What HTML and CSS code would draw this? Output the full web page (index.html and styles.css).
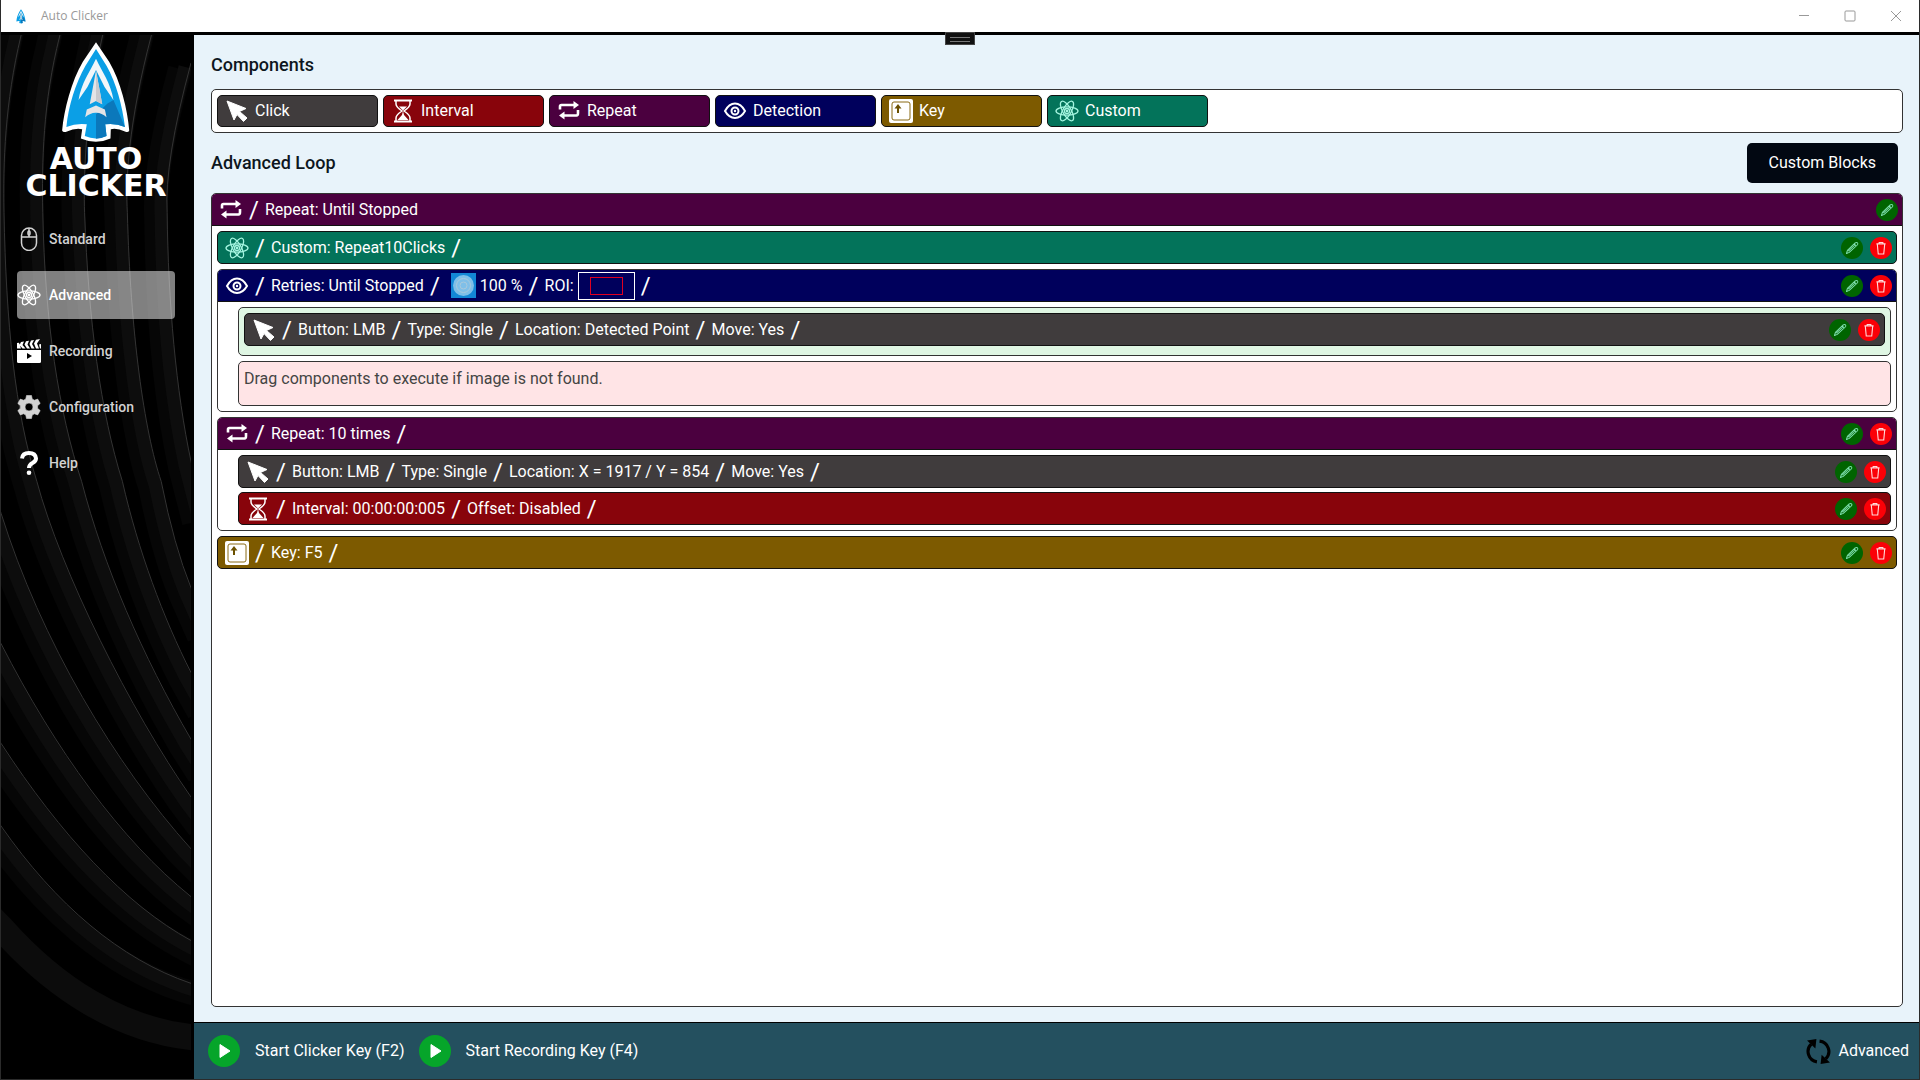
FILE: index.html
```html
<!DOCTYPE html>
<html lang="en">
<head>
    <meta charset="UTF-8">
    <meta name="viewport" content="width=device-width, initial-scale=1.0">
    <title>Auto Clicker</title>
    <link rel="stylesheet" href="styles.css">
</head>
<body>

    <!-- icon sprite -->
    <svg class="sprite" aria-hidden="true">
        <symbol id="arrowhead" viewBox="184 122 212 310">
            <path fill="#fff" d="M290 126L330 185C365 245 386 330 391 394Q388 402 378 397Q355 386 335 390L334 418Q290 438 244 418L248 390Q225 386 202 397Q190 402 187 394C193 330 215 245 250 185Z"/>
            <path fill="#0b9fe6" d="M290 146L322 197C352 250 370 320 378 383Q350 371 318 375L322 411Q290 426 256 411L262 375Q230 371 200 383C206 320 228 250 258 197Z"/>
            <path fill="#0b78bb" d="M318 375L322 411Q306 419 290 419V345L325 312L343 301L378 383Q350 371 318 375Z"/>
            <path fill="#f2f6f9" d="M290 176C308 215 335 250 343 301L316 262L290 210L264 262L237 301C245 250 272 215 290 176Z"/>
            <path fill="#e4e4e6" d="M290 212L309 314L290 304L271 314Z"/>
            <path fill="#c9c9cd" d="M290 212L309 314L290 304Z"/>
            <path fill="#e4e4e6" d="M262 330L290 318L317 330L322 354Q306 339 290 340Q274 339 257 354Z"/>
        </symbol>
        <symbol id="cursor" viewBox="0 0 24 24">
            <path fill="currentColor" d="M2 2L21 9.500L14.500 12.500L22 19L18.500 22.500L12 15.500L9 21Z" stroke="currentColor" stroke-linejoin="round"/>
        </symbol>
        <symbol id="hourglass" viewBox="0 0 24 24">
            <g fill="none" stroke="currentColor" stroke-width="1.500">
                <path d="M3 1.500H21M3 22.500H21" stroke-width="2"/>
                <path d="M5 2V5Q5 8 11 12Q5 16 5 19V22M19 2V5Q19 8 13 12Q19 16 19 19V22"/>
            </g>
            <path fill="currentColor" d="M8 7.500H16L12 11.500ZM12 12L13 16L17.500 21H6.500L11 16Z"/>
        </symbol>
        <symbol id="repeat" viewBox="0 0 24 24">
            <g fill="none" stroke="currentColor" stroke-width="2.600">
                <path d="M3 10.500V7.500Q3 6 4.500 6H18"/>
                <path d="M21 11V14Q21 16.500 19.500 16.500H6"/>
            </g>
            <path fill="currentColor" d="M16.500 2L22 6L16.500 10ZM7.500 12.500L2 16.500L7.500 20.500Z"/>
        </symbol>
        <symbol id="eye" viewBox="0 0 24 24">
            <g fill="none" stroke="currentColor" stroke-width="2">
                <path d="M2 12Q6 4.500 12 4.500T22 12Q18 19 12 19T2 12Z"/>
                <circle cx="12" cy="12" r="3.500"/>
            </g>
            <circle cx="12" cy="12" r="1.200" fill="currentColor"/>
        </symbol>
        <symbol id="key" viewBox="0 0 24 24">
            <rect width="24" height="24" rx="2" fill="#fff"/>
            <rect x="3" y="3" width="18" height="18" rx="2" fill="none" stroke="#8a6a14" stroke-width="1"/>
            <path fill="#6b5000" d="M9 5L12.500 9.500H10V14H8V9.500H5.500Z"/>
        </symbol>
        <symbol id="atom" viewBox="0 0 24 24">
            <g fill="none" stroke="currentColor" stroke-width="1.300">
                <ellipse cx="12" cy="12" rx="11" ry="4.200"/>
                <ellipse cx="12" cy="12" rx="11" ry="4.200" transform="rotate(60 12 12)"/>
                <ellipse cx="12" cy="12" rx="11" ry="4.200" transform="rotate(120 12 12)"/>
                <circle cx="12" cy="12" r="2.500"/>
            </g>
            <circle cx="12" cy="12" r="1.300" fill="currentColor"/>
        </symbol>
        <symbol id="mouse" viewBox="0 0 24 24">
            <g fill="none" stroke="currentColor" stroke-width="1.500">
                <rect x="4.500" y="1" width="15" height="22.500" rx="7.500"/>
                <path d="M4.500 10H19.500M12 1V10"/>
                <rect x="11" y="4" width="2" height="4" rx="1"/>
            </g>
        </symbol>
        <symbol id="clapper" viewBox="0 0 24 24">
            <path fill="currentColor" d="M0 11H24V22.500Q24 24 22.500 24H1.500Q0 24 0 22.500Z"/>
            <path fill="#000" d="M10 14L15 17L10 20Z"/>
            <path fill="currentColor" d="M0 4L2 3.700L4 9.500H0ZM4 3L7 2.500L5.500 6L8.500 9.500H5.500L2.500 6ZM9 2.300L12 1.800L10.500 5.500L13 9.500H10L7.500 5.500ZM14 1.500L17 1L15 5L17.500 9.500H14.500L12.500 5ZM19 .7L23 0L20 4.500L22 9.500H19L17 4.500ZM24 5V9.500H23L22 5.500Z"/>
        </symbol>
        <symbol id="gear" viewBox="0 0 24 24">
            <path fill="currentColor" fill-rule="evenodd" d="M9.500 0.500H14.500L15.200 3.900L17.400 5.200L20.700 4.100L23.200 8.400L20.600 10.700V13.300L23.200 15.600L20.700 19.900L17.400 18.800L15.200 20.100L14.500 23.500H9.500L8.800 20.100L6.600 18.800L3.300 19.900L.8 15.600L3.400 13.300V10.700L.8 8.400L3.300 4.100L6.600 5.200L8.800 3.900ZM12 8A4 4 0 1 0 12 16A4 4 0 1 0 12 8Z" stroke="currentColor" stroke-linejoin="round" stroke-width=".6"/>
        </symbol>
        <symbol id="question" viewBox="0 0 24 24">
            <path fill="none" stroke="currentColor" stroke-width="4" d="M5 7.500Q5.500 2 12 2T19 7.500Q19 10 15.500 12Q12 13.800 12 17"/>
            <circle cx="12" cy="21.700" r="2.300" fill="currentColor"/>
        </symbol>
        <symbol id="pencil" viewBox="0 0 24 24">
            <circle cx="12" cy="12" r="12" fill="#006400"/>
            <path fill="none" stroke="#7fe0b0" stroke-width="1.100" stroke-linejoin="round" d="M6 18L7 14.500L15.500 6.500Q17 5.500 18 6.500T17.500 9L9 16.800ZM14.500 7.500L16.500 9.800M8 15.500L15 9"/>
        </symbol>
        <symbol id="trash" viewBox="0 0 24 24">
            <circle cx="12" cy="12" r="12" fill="#fb0007"/>
            <path fill="none" stroke="#ffd9d9" stroke-width="1.200" d="M7 7.500H17M10 7.500V6H14V7.500M8 8L9 18.500H15L16 8"/>
        </symbol>
        <symbol id="play" viewBox="0 0 32 32">
            <circle cx="16" cy="16" r="16" fill="#06a52a"/>
            <path fill="#fff" stroke="#fff" stroke-linejoin="round" d="M12 9.500L22 16L12 22.500Z"/>
        </symbol>
        <symbol id="sync" viewBox="0 0 24 24">
            <g fill="none" stroke="currentColor" stroke-width="3">
                <path d="M10.500 22A10 10 0 0 1 5 5"/>
                <path d="M13 2A10 10 0 0 1 19 19"/>
            </g>
            <path fill="currentColor" d="M1 1.500L10 0L9 9ZM23 22.500L14 24L15 15Z"/>
        </symbol>
    </svg>

    <header class="titlebar">
        <svg class="titlebar-icon"><use href="#arrowhead"/></svg>
        <span class="titlebar-text">Auto Clicker</span>
        <button class="win-btn" aria-label="Minimize"><svg viewBox="0 0 12 12"><path d="M1 5.500H11"/></svg></button>
        <button class="win-btn" aria-label="Maximize"><svg viewBox="0 0 12 12"><rect x="1" y="1" width="10" height="10" rx="1"/></svg></button>
        <button class="win-btn" aria-label="Close"><svg viewBox="0 0 12 12"><path d="M1 1L11 11M11 1L1 11"/></svg></button>
    </header>

    <div class="window">
        <div class="grip"></div>

        <aside class="sidebar">
            <svg class="waves" viewBox="0 32 191 1048" preserveAspectRatio="none" aria-hidden="true">
                <defs>
                    <g id="curves">
                        <path d="M191 60Q164 160 167 210C168 300 176 390 191 460L205 515"/>
                        <path d="M158 0L151 33C128 120 125 180 127 210C130 330 144 430 161 480Q174 545 191 587L210 630"/>
                        <path d="M109 0L102 33C84 110 83 180 84 210C88 320 100 410 122 480C138 550 163 617 191 672L210 706"/>
                        <path d="M66 0L59 33C42 100 41 160 42 210C44 320 58 410 81 480C103 565 142 655 191 739L210 769"/>
                        <path d="M27 0L20 33C4 100 2 160 3 210C5 320 14 410 36 480C60 570 130 710 191 797L210 822"/>
                        <path d="M-10 480L0 512C40 640 115 765 191 849L210 868"/>
                        <path d="M-10 620L0 643C55 750 120 840 191 897L210 911"/>
                        <path d="M-10 725L0 743C60 835 125 905 191 941L210 951"/>
                        <path d="M-10 811L0 826C55 905 120 960 191 984L210 990"/>
                    </g>
                </defs>
                <use href="#curves" class="wave-soft" transform="translate(-11 6)"/>
                <use href="#curves" class="wave-band" transform="translate(-6 4)"/>
                <path class="wave-last" d="M-10 918L0 928C55 990 120 1030 191 1038L210 1040"/>
                <use href="#curves" class="wave-line"/>
            </svg>

            <div class="brand">
                <svg class="brand-mark"><use href="#arrowhead"/></svg>
                <div class="brand-name">AUTO<br>CLICKER</div>
            </div>

            <nav class="nav">
                <a href="#standard"><svg class="icon"><use href="#mouse"/></svg>Standard</a>
                <a href="#advanced" class="active"><svg class="icon"><use href="#atom"/></svg>Advanced</a>
                <a href="#recording"><svg class="icon bright"><use href="#clapper"/></svg>Recording</a>
                <a href="#configuration"><svg class="icon"><use href="#gear"/></svg>Configuration</a>
                <a href="#help"><svg class="icon bright"><use href="#question"/></svg>Help</a>
            </nav>
        </aside>

        <div class="content">
            <main class="main">
                <h2>Components</h2>
                <div class="palette">
                    <button class="component click"><svg class="icon"><use href="#cursor"/></svg>Click</button>
                    <button class="component interval"><svg class="icon"><use href="#hourglass"/></svg>Interval</button>
                    <button class="component repeat"><svg class="icon"><use href="#repeat"/></svg>Repeat</button>
                    <button class="component detection"><svg class="icon"><use href="#eye"/></svg>Detection</button>
                    <button class="component key"><svg class="icon"><use href="#key"/></svg>Key</button>
                    <button class="component custom"><svg class="icon"><use href="#atom"/></svg>Custom</button>
                </div>

                <div class="toolbar">
                    <h2>Advanced Loop</h2>
                    <button class="dark-btn">Custom Blocks</button>
                </div>

                <section class="group loop">
                    <div class="row repeat">
                        <svg class="icon"><use href="#repeat"/></svg>
                        <span class="slash">/</span><span>Repeat: Until Stopped</span>
                        <span class="actions">
                            <button aria-label="Edit"><svg><use href="#pencil"/></svg></button>
                        </span>
                    </div>

                    <div class="group-body">
                        <div class="row custom">
                            <svg class="icon"><use href="#atom"/></svg>
                            <span class="slash">/</span><span>Custom: Repeat10Clicks</span><span class="slash">/</span>
                            <span class="actions">
                                <button aria-label="Edit"><svg><use href="#pencil"/></svg></button>
                                <button aria-label="Delete"><svg><use href="#trash"/></svg></button>
                            </span>
                        </div>

                        <div class="group">
                            <div class="row detection">
                                <svg class="icon"><use href="#eye"/></svg>
                                <span class="slash">/</span><span>Retries: Until Stopped</span><span class="slash">/</span>
                                <span class="match image-match">
                                    <svg class="thumb" viewBox="0 0 25 25">
                                        <rect width="25" height="25" fill="#1287d6"/>
                                        <circle cx="12.500" cy="12.500" r="10.500" fill="#7fbfe8"/>
                                        <g fill="none" stroke="#a9c9dc"><circle cx="12.500" cy="12.500" r="7"/><circle cx="12.500" cy="12.500" r="3.500"/></g>
                                    </svg>
                                    100 %
                                </span>
                                <span class="slash">/</span>
                                <span class="match">ROI:<span class="roi"><span class="roi-area"></span></span></span>
                                <span class="slash">/</span>
                                <span class="actions">
                                    <button aria-label="Edit"><svg><use href="#pencil"/></svg></button>
                                    <button aria-label="Delete"><svg><use href="#trash"/></svg></button>
                                </span>
                            </div>
                            <div class="group-body">
                                <div class="drop found">
                                    <div class="row click">
                                        <svg class="icon"><use href="#cursor"/></svg>
                                        <span class="slash">/</span><span>Button: LMB</span><span class="slash">/</span><span>Type: Single</span><span class="slash">/</span><span>Location: Detected Point</span><span class="slash">/</span><span>Move: Yes</span><span class="slash">/</span>
                                        <span class="actions">
                                            <button aria-label="Edit"><svg><use href="#pencil"/></svg></button>
                                            <button aria-label="Delete"><svg><use href="#trash"/></svg></button>
                                        </span>
                                    </div>
                                </div>
                                <div class="drop not-found">Drag components to execute if image is not found.</div>
                            </div>
                        </div>

                        <div class="group">
                            <div class="row repeat">
                                <svg class="icon"><use href="#repeat"/></svg>
                                <span class="slash">/</span><span>Repeat: 10 times</span><span class="slash">/</span>
                                <span class="actions">
                                    <button aria-label="Edit"><svg><use href="#pencil"/></svg></button>
                                    <button aria-label="Delete"><svg><use href="#trash"/></svg></button>
                                </span>
                            </div>
                            <div class="group-body tight">
                                <div class="row click">
                                    <svg class="icon"><use href="#cursor"/></svg>
                                    <span class="slash">/</span><span>Button: LMB</span><span class="slash">/</span><span>Type: Single</span><span class="slash">/</span><span>Location: X = 1917 / Y = 854</span><span class="slash">/</span><span>Move: Yes</span><span class="slash">/</span>
                                    <span class="actions">
                                        <button aria-label="Edit"><svg><use href="#pencil"/></svg></button>
                                        <button aria-label="Delete"><svg><use href="#trash"/></svg></button>
                                    </span>
                                </div>
                                <div class="row interval">
                                    <svg class="icon"><use href="#hourglass"/></svg>
                                    <span class="slash">/</span><span>Interval: 00:00:00:005</span><span class="slash">/</span><span>Offset: Disabled</span><span class="slash">/</span>
                                    <span class="actions">
                                        <button aria-label="Edit"><svg><use href="#pencil"/></svg></button>
                                        <button aria-label="Delete"><svg><use href="#trash"/></svg></button>
                                    </span>
                                </div>
                            </div>
                        </div>

                        <div class="row key">
                            <svg class="icon"><use href="#key"/></svg>
                            <span class="slash">/</span><span>Key: F5</span><span class="slash">/</span>
                            <span class="actions">
                                <button aria-label="Edit"><svg><use href="#pencil"/></svg></button>
                                <button aria-label="Delete"><svg><use href="#trash"/></svg></button>
                            </span>
                        </div>
                    </div>
                </section>
            </main>

            <footer class="statusbar">
                <button class="start"><svg><use href="#play"/></svg>Start Clicker Key (F2)</button>
                <button class="start"><svg><use href="#play"/></svg>Start Recording Key (F4)</button>
                <span class="mode"><svg><use href="#sync"/></svg>Advanced</span>
            </footer>
        </div>
    </div>

</body>
</html>
```
FILE: styles.css
```css
* {
    box-sizing: border-box;
}

body {
    margin: 0;
    height: 100vh;
    display: flex;
    flex-direction: column;
    border: 1px solid #2b2b2b;
    border-top: 0;
    font-family: Roboto, "Liberation Sans", sans-serif;
    font-size: 16px;
    line-height: 24px;
    color: #0d1620;
}

button {
    font: inherit;
    color: inherit;
    background: none;
    border: 0;
    padding: 0;
    cursor: pointer;
}

svg {
    display: block;
    flex: none;
}

h2 {
    margin: 0;
    font-size: 18px;
    font-weight: 500;
    line-height: 24px;
}

.sprite {
    position: absolute;
    width: 0;
    height: 0;
}

/* title bar */
.titlebar {
    display: flex;
    align-items: center;
    height: 32px;
    padding-left: 14px;
    background: #fff;
    color: #999;
    font-family: "Open Sans", sans-serif;
    font-size: 12px;
}

.titlebar-icon {
    width: 12px;
    height: 16px;
}

.titlebar-text {
    flex: 1;
    padding-left: 14px;
}

.win-btn {
    width: 46px;
    height: 32px;
    display: flex;
    align-items: center;
    justify-content: center;
}

.win-btn svg {
    width: 12px;
    height: 12px;
    fill: none;
    stroke: #999;
}

.window {
    position: relative;
    flex: 1;
    min-height: 0;
    display: flex;
    border-top: 3px solid #000;
    background: #000;
}

.grip {
    position: absolute;
    top: -3px;
    left: 50%;
    width: 30px;
    height: 13px;
    margin-left: -15px;
    padding: 4px;
    background: #111;
    border: 1px solid #444;
}

.grip::before {
    content: "";
    display: block;
    height: 3px;
    border-top: 1px solid #777;
    border-bottom: 1px solid #777;
}

/* sidebar */
.sidebar {
    position: relative;
    flex: none;
    width: 193px;
    overflow: hidden;
    padding: 6px 19px 0 16px;
    background: #000;
}

.waves {
    position: absolute;
    top: 0;
    left: 0;
    width: 190px;
    height: 100%;
    fill: none;
}

.wave-soft {
    stroke: #060606;
    stroke-width: 24px;
}

.wave-band {
    stroke: #0d0d0d;
    stroke-width: 13px;
}

.wave-last {
    stroke: #0c0c0c;
    stroke-width: 26px;
}

.wave-line {
    stroke: #333;
    stroke-width: 1px;
}

.brand {
    position: relative;
    display: flex;
    flex-direction: column;
    align-items: center;
    height: 174px;
    color: #fff;
}

.brand-mark {
    width: 70px;
    height: 102px;
}

.brand-name {
    padding-top: 2px;
    font-family: "DejaVu Sans", sans-serif;
    font-weight: bold;
    font-size: 30px;
    line-height: 27px;
    text-align: center;
}

.nav {
    position: relative;
    display: flex;
    flex-direction: column;
    gap: 8px;
}

.nav a {
    display: flex;
    align-items: center;
    gap: 8px;
    height: 48px;
    border-radius: 4px;
    color: #d2d2d2;
    font-size: 14px;
    font-weight: 500;
    text-decoration: none;
}

.nav .active {
    background: rgba(255, 255, 255, 0.5);
    color: #fff;
}

.icon {
    width: 24px;
    height: 24px;
}

.bright {
    color: #fff;
}

/* main area */
.content {
    flex: 1;
    min-width: 0;
    display: flex;
    flex-direction: column;
}

.main {
    flex: 1;
    min-height: 0;
    display: flex;
    flex-direction: column;
    padding: 18px 16px 15px 17px;
    background: #e8f3fa;
}

.palette {
    display: flex;
    gap: 5px;
    margin-top: 12px;
    padding: 5px;
    background: #fff;
    border: 1px solid #333;
    border-radius: 5px;
}

.component {
    display: flex;
    align-items: center;
    gap: 6px;
    width: 161px;
    height: 32px;
    padding-left: 7px;
    border: 1px solid #111;
    border-radius: 5px;
    color: #fff;
}

.toolbar {
    display: flex;
    align-items: center;
    justify-content: space-between;
    padding: 10px 5px 10px 0;
}

.dark-btn {
    height: 40px;
    padding: 0 22px;
    border-radius: 5px;
    background: #020812;
    color: #fff;
}

.click {
    background: #403c3d;
}

.interval {
    background: #88040b;
}

.repeat {
    background: #4b003f;
}

.detection {
    background: #00005c;
}

.key {
    background: #7d5a00;
}

.custom {
    background: #03735a;
}

.custom .icon {
    color: #a5f5e0;
}

/* loop tree */
.group {
    background: #fff;
    border: 1px solid #333;
    border-radius: 5px;
}

.loop {
    flex: 1;
}

.row {
    display: flex;
    align-items: center;
    gap: 7px;
    height: 33px;
    padding: 0 4px 0 7px;
    border: 1px solid #111;
    border-radius: 5px;
    color: #fff;
    white-space: nowrap;
}

.group > .row {
    height: 32px;
    border-width: 0 0 1px;
    border-radius: 4px 4px 0 0;
}

.slash {
    display: flex;
    justify-content: center;
    width: 8px;
    font-size: 24px;
}

.group-body {
    display: flex;
    flex-direction: column;
    gap: 5px;
    padding: 5px 5px 5px 20px;
}

.loop > .group-body {
    padding-left: 5px;
}

.tight {
    gap: 4px;
}

.actions {
    display: flex;
    gap: 7px;
    margin-left: auto;
}

.actions svg {
    width: 22px;
    height: 22px;
}

.match {
    display: flex;
    align-items: center;
    gap: 4px;
}

.image-match {
    padding-left: 5px;
}

.thumb {
    width: 25px;
    height: 25px;
}

.roi {
    display: flex;
    align-items: center;
    justify-content: center;
    width: 57px;
    height: 28px;
    border: 1px solid #fff;
}

.roi-area {
    width: 33px;
    height: 18px;
    border: 1px solid #e00020;
}

.drop {
    min-height: 45px;
    padding: 5px;
    border: 1px solid #333;
    border-radius: 5px;
}

.found {
    padding-bottom: 9px;
    background: #dff6e3;
}

.not-found {
    background: #ffe4e6;
    color: #444;
}

/* status bar */
.statusbar {
    display: flex;
    align-items: center;
    gap: 14px;
    height: 57px;
    padding: 0 10px 0 14px;
    border-top: 1px solid #000;
    background: #24505f;
    color: #fff;
}

.start {
    display: flex;
    align-items: center;
    gap: 15px;
}

.start svg {
    width: 32px;
    height: 32px;
}

.mode {
    display: flex;
    align-items: center;
    gap: 7px;
    margin-left: auto;
}

.mode svg {
    width: 25px;
    height: 25px;
    color: #000;
}
```
